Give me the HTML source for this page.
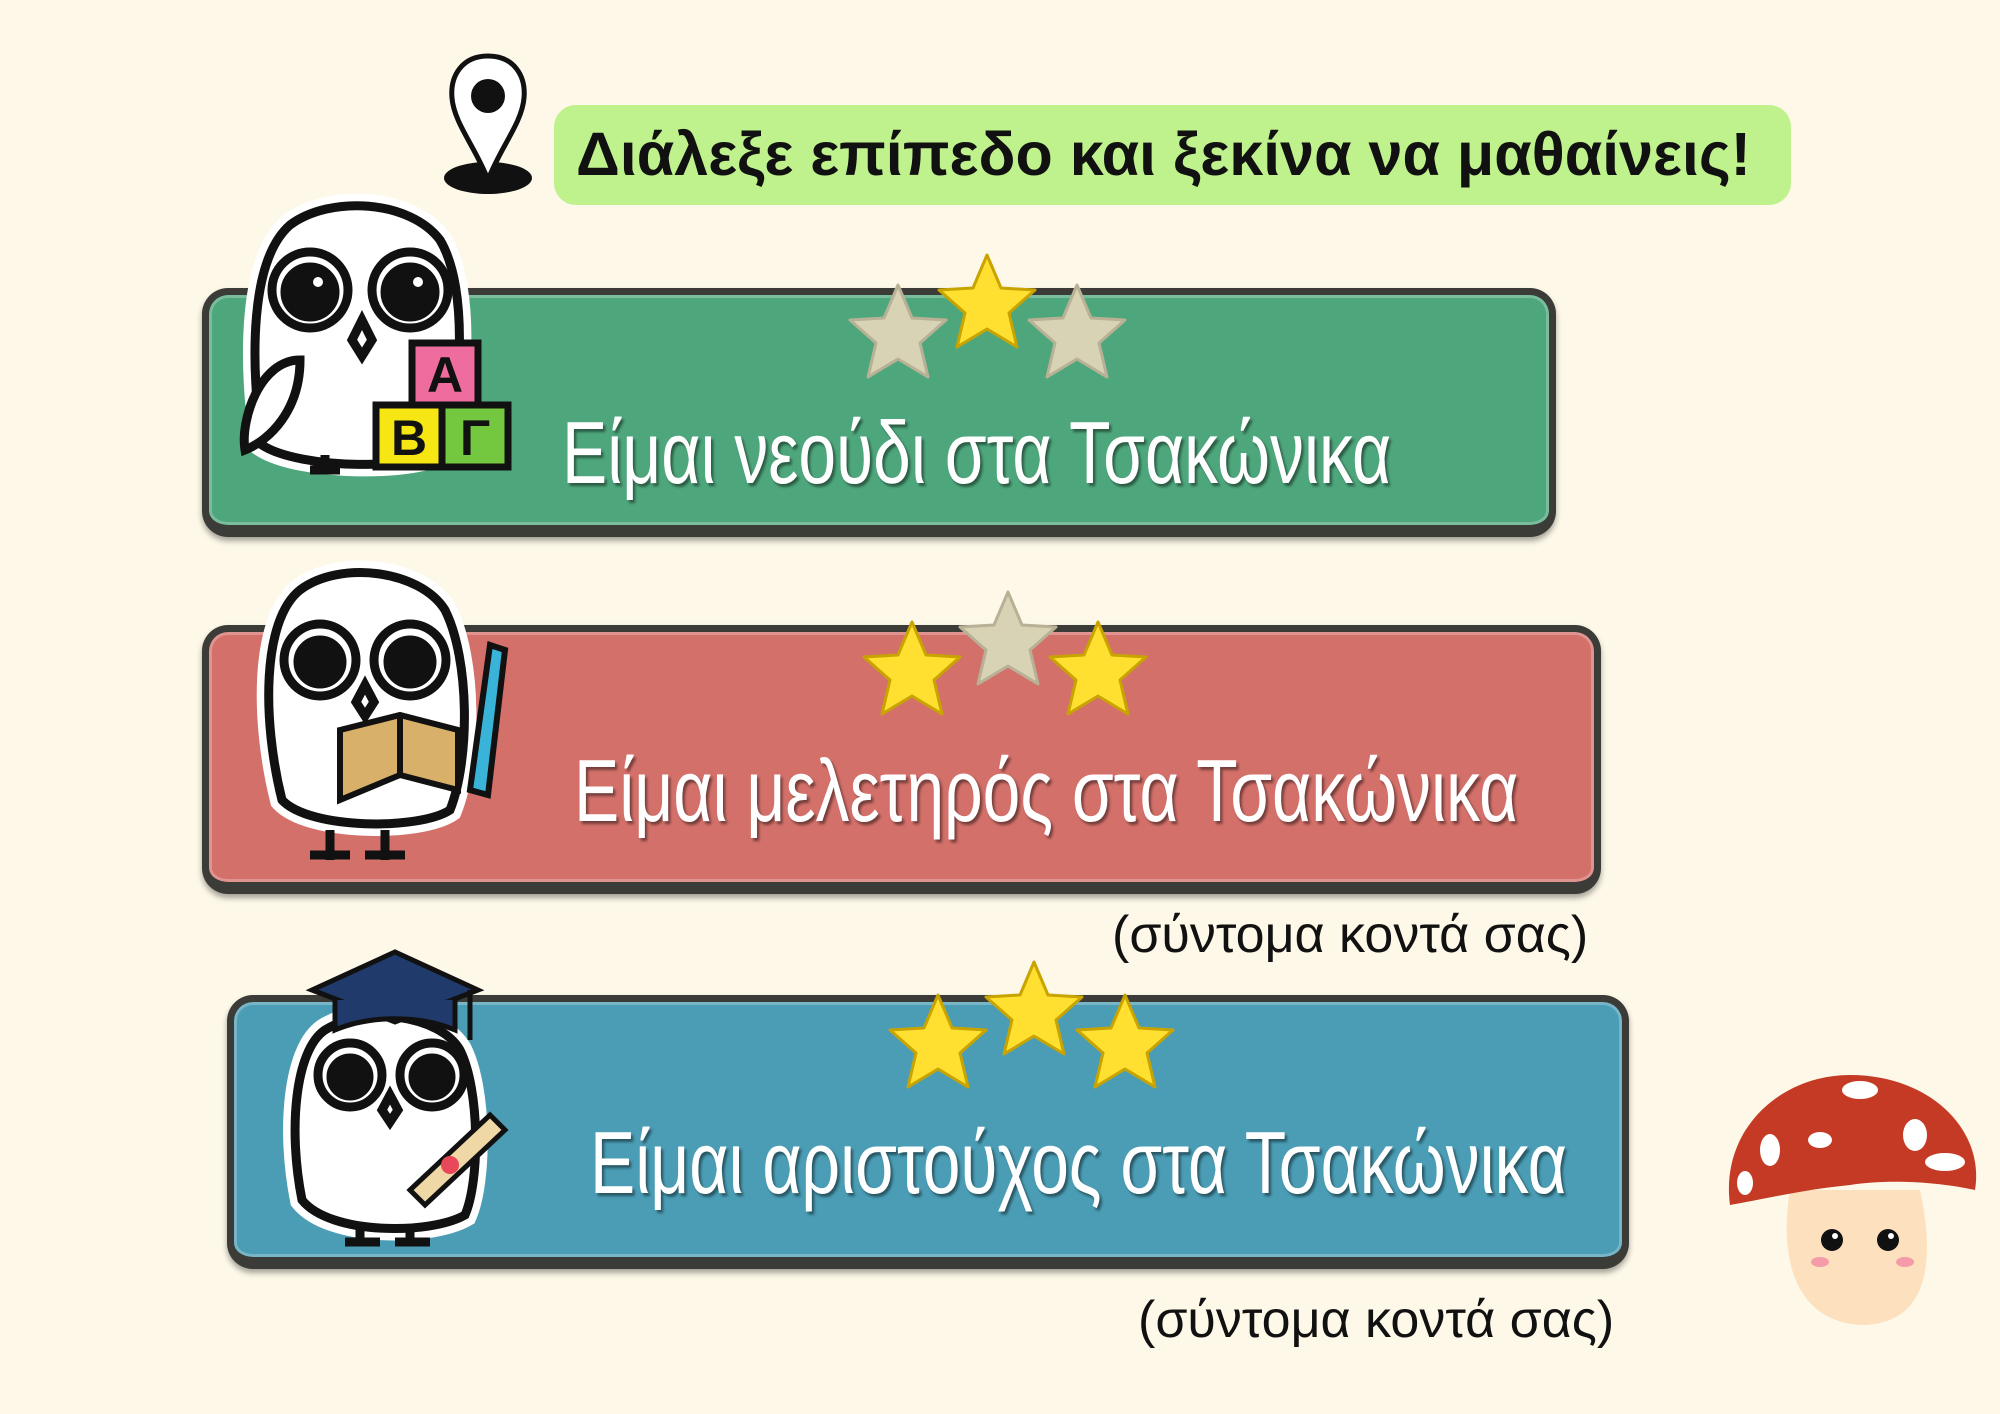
<!DOCTYPE html>
<html><head><meta charset="utf-8"><style>
html,body{margin:0;padding:0}
body{width:2000px;height:1414px;background:#fdf8e8;position:relative;overflow:hidden;font-family:"Liberation Sans","DejaVu Sans",sans-serif}
.pill{position:absolute;left:554px;top:105px;width:1237px;height:100px;background:#bff28c;border-radius:22px}
.pill span{position:absolute;left:22px;top:14px;font-size:61px;font-weight:bold;color:#111;white-space:nowrap;transform:scaleX(1.0);transform-origin:left}
.bar{position:absolute;border-radius:26px;border:7px solid #3b3b38;border-top-width:7px;border-bottom-width:12px;box-shadow:0 4px 6px rgba(0,0,0,.35), inset 0 0 0 3px rgba(255,255,255,.25)}
.t{position:absolute;color:#fff;font-size:88px;white-space:nowrap;transform:scaleX(0.77);transform-origin:left;text-shadow:3px 3px 3px rgba(0,0,0,.45)}
.soon{position:absolute;font-size:52px;color:#111;white-space:nowrap}
svg{position:absolute;overflow:visible}
</style></head><body>

<svg style="left:440px;top:48px" width="96" height="150" viewBox="0 0 96 150">
<ellipse cx="48" cy="130" rx="44" ry="16" fill="#111"/>
<path d="M48 8 C22 8 10 28 12 50 C14 75 36 100 48 132 C60 100 82 75 84 50 C86 28 74 8 48 8Z" fill="#fff" stroke="#111" stroke-width="5"/>
<circle cx="48" cy="48" r="17" fill="#111"/>
</svg>

<div class="pill"><span>Διάλεξε επίπεδο και ξεκίνα να μαθαίνεις!</span></div>

<div class="bar" style="left:202px;top:288px;width:1340px;height:230px;background:#4ea77c"></div>
<div class="bar" style="left:202px;top:625px;width:1385px;height:250px;background:#d4706a"></div>
<div class="bar" style="left:227px;top:995px;width:1388px;height:255px;background:#4a9db5"></div>

<div class="t" style="left:562px;top:402px">Είμαι νεούδι στα Τσακώνικα</div>
<div class="t" style="left:574px;top:740px">Είμαι μελετηρός στα Τσακώνικα</div>
<div class="t" style="left:590px;top:1112px">Είμαι αριστούχος στα Τσακώνικα</div>

<div class="soon" style="left:1112px;top:905px">(σύντομα κοντά σας)</div>
<div class="soon" style="left:1138px;top:1290px">(σύντομα κοντά σας)</div>

<svg width="0" height="0"><defs>
<path id="st" d="M0 -50 L14 -17 L48 -15 L22 8 L30 42 L0 24 L-30 42 L-22 8 L-48 -15 L-14 -17Z" stroke-linejoin="round"/>
</defs></svg>
<svg style="left:0;top:0" width="2000" height="1414">
<g stroke="#c9a400" stroke-width="3">
<use href="#st" x="898" y="335" fill="#d8d3b4" stroke="#b8b196"/>
<use href="#st" x="987" y="305" fill="#ffe030"/>
<use href="#st" x="1077" y="335" fill="#d8d3b4" stroke="#b8b196"/>
<use href="#st" x="912" y="672" fill="#ffe030"/>
<use href="#st" x="1008" y="642" fill="#d8d3b4" stroke="#b8b196"/>
<use href="#st" x="1098" y="672" fill="#ffe030"/>
<use href="#st" x="938" y="1045" fill="#ffe030"/>
<use href="#st" x="1034" y="1012" fill="#ffe030"/>
<use href="#st" x="1125" y="1045" fill="#ffe030"/>
</g>

<!-- owl 1 -->
<g stroke="#111" stroke-width="9" fill="#fff">
<path d="M262 445 C250 360 250 260 290 225 C330 195 410 200 440 240 C470 290 460 400 445 450 C420 470 300 470 262 445Z" stroke="#fff" stroke-width="24"/>
<path d="M262 445 C250 360 250 260 290 225 C330 195 410 200 440 240 C470 290 460 400 445 450 C420 470 300 470 262 445Z"/>
<circle cx="310" cy="290" r="38"/><circle cx="410" cy="290" r="38"/>
<circle cx="310" cy="292" r="25" fill="#111"/><circle cx="410" cy="292" r="25" fill="#111"/>
<path d="M362 320 L352 340 L362 356 L372 340Z"/>
<path d="M300 360 C260 360 240 420 245 450 C270 440 300 410 300 360Z"/>
<path d="M325 455 V470 M310 470 H340"/>
</g>
<circle cx="318" cy="282" r="5" fill="#fff"/><circle cx="418" cy="282" r="5" fill="#fff"/>
<g stroke="#111" stroke-width="7">
<rect x="412" y="343" width="66" height="62" fill="#ef6d9e"/>
<rect x="376" y="405" width="66" height="62" fill="#f5e614"/>
<rect x="442" y="405" width="66" height="62" fill="#73c840"/>
</g>
<g font-family="Liberation Sans" font-weight="bold" font-size="50" fill="#111" text-anchor="middle">
<text x="445" y="392">Α</text><text x="409" y="455">Β</text><text x="475" y="455">Γ</text>
</g>

<!-- owl 2 -->
<g stroke="#111" stroke-width="9" fill="#fff">
<path d="M282 800 C262 720 262 620 300 590 C340 560 420 570 445 610 C470 660 470 760 450 810 C420 830 310 830 282 800Z" stroke="#fff" stroke-width="24"/>
<path d="M282 800 C262 720 262 620 300 590 C340 560 420 570 445 610 C470 660 470 760 450 810 C420 830 310 830 282 800Z"/>
<circle cx="320" cy="660" r="36"/><circle cx="410" cy="660" r="36"/>
<circle cx="320" cy="662" r="22" fill="#111"/><circle cx="410" cy="662" r="22" fill="#111"/>
<path d="M365 685 L356 702 L365 716 L374 702Z"/>
<path d="M330 830 V860 M310 855 H350 M385 830 V860 M365 855 H405"/>
</g>
<g stroke="#111" stroke-width="6">
<path d="M340 730 L400 715 L458 730 L458 790 L400 775 L340 800Z" fill="#d8b06a"/>
<path d="M400 715 V775" fill="none"/>
<path d="M470 790 L490 645 L505 650 L488 795Z" fill="#3ab3d8"/>
</g>

<!-- owl 3 -->
<g stroke="#111" stroke-width="9" fill="#fff">
<path d="M302 1200 C288 1130 295 1050 325 1030 C365 1005 440 1015 460 1050 C480 1090 480 1180 465 1215 C430 1235 330 1235 302 1200Z" stroke="#fff" stroke-width="24"/>
<path d="M302 1200 C288 1130 295 1050 325 1030 C365 1005 440 1015 460 1050 C480 1090 480 1180 465 1215 C430 1235 330 1235 302 1200Z"/>
<circle cx="350" cy="1075" r="32"/><circle cx="432" cy="1075" r="32"/>
<circle cx="350" cy="1077" r="19" fill="#111"/><circle cx="432" cy="1077" r="19" fill="#111"/>
<path d="M390 1095 L382 1110 L390 1122 L398 1110Z"/>
<path d="M360 1225 V1245 M345 1242 H380 M410 1225 V1245 M395 1242 H430"/>
</g>
<path d="M312 990 L395 952 L478 990 L395 1022Z" fill="#1f3a6b" stroke="#111" stroke-width="5"/>
<path d="M335 1000 V1030 C370 1015 420 1015 455 1030 V1000" fill="#1f3a6b" stroke="#111" stroke-width="5"/>
<path d="M470 990 V1040" stroke="#111" stroke-width="5"/>
<path d="M410 1190 L490 1115 L505 1130 L425 1205Z" fill="#f0d7a6" stroke="#111" stroke-width="5"/>
<circle cx="450" cy="1165" r="9" fill="#e8485a"/>

<!-- mushroom -->
<path d="M1790 1190 C1780 1250 1790 1320 1860 1325 C1930 1325 1935 1260 1920 1190Z" fill="#fde0bd"/>
<path d="M1730 1205 C1720 1130 1780 1075 1850 1075 C1930 1075 1985 1130 1975 1190 C1930 1180 1880 1180 1850 1185 C1800 1190 1760 1200 1730 1205Z" fill="#c43a24"/>
<g fill="#fff">
<ellipse cx="1860" cy="1090" rx="18" ry="9"/><ellipse cx="1915" cy="1135" rx="12" ry="16"/>
<ellipse cx="1770" cy="1150" rx="10" ry="16"/><ellipse cx="1820" cy="1140" rx="12" ry="8"/>
<ellipse cx="1945" cy="1162" rx="20" ry="9"/><ellipse cx="1745" cy="1183" rx="8" ry="12"/>
</g>
<circle cx="1832" cy="1240" r="11" fill="#111"/><circle cx="1888" cy="1240" r="11" fill="#111"/>
<circle cx="1835" cy="1236" r="3" fill="#fff"/><circle cx="1891" cy="1236" r="3" fill="#fff"/>
<ellipse cx="1820" cy="1262" rx="9" ry="5" fill="#f59aa8"/><ellipse cx="1905" cy="1262" rx="9" ry="5" fill="#f59aa8"/>
</svg>
</body></html>
